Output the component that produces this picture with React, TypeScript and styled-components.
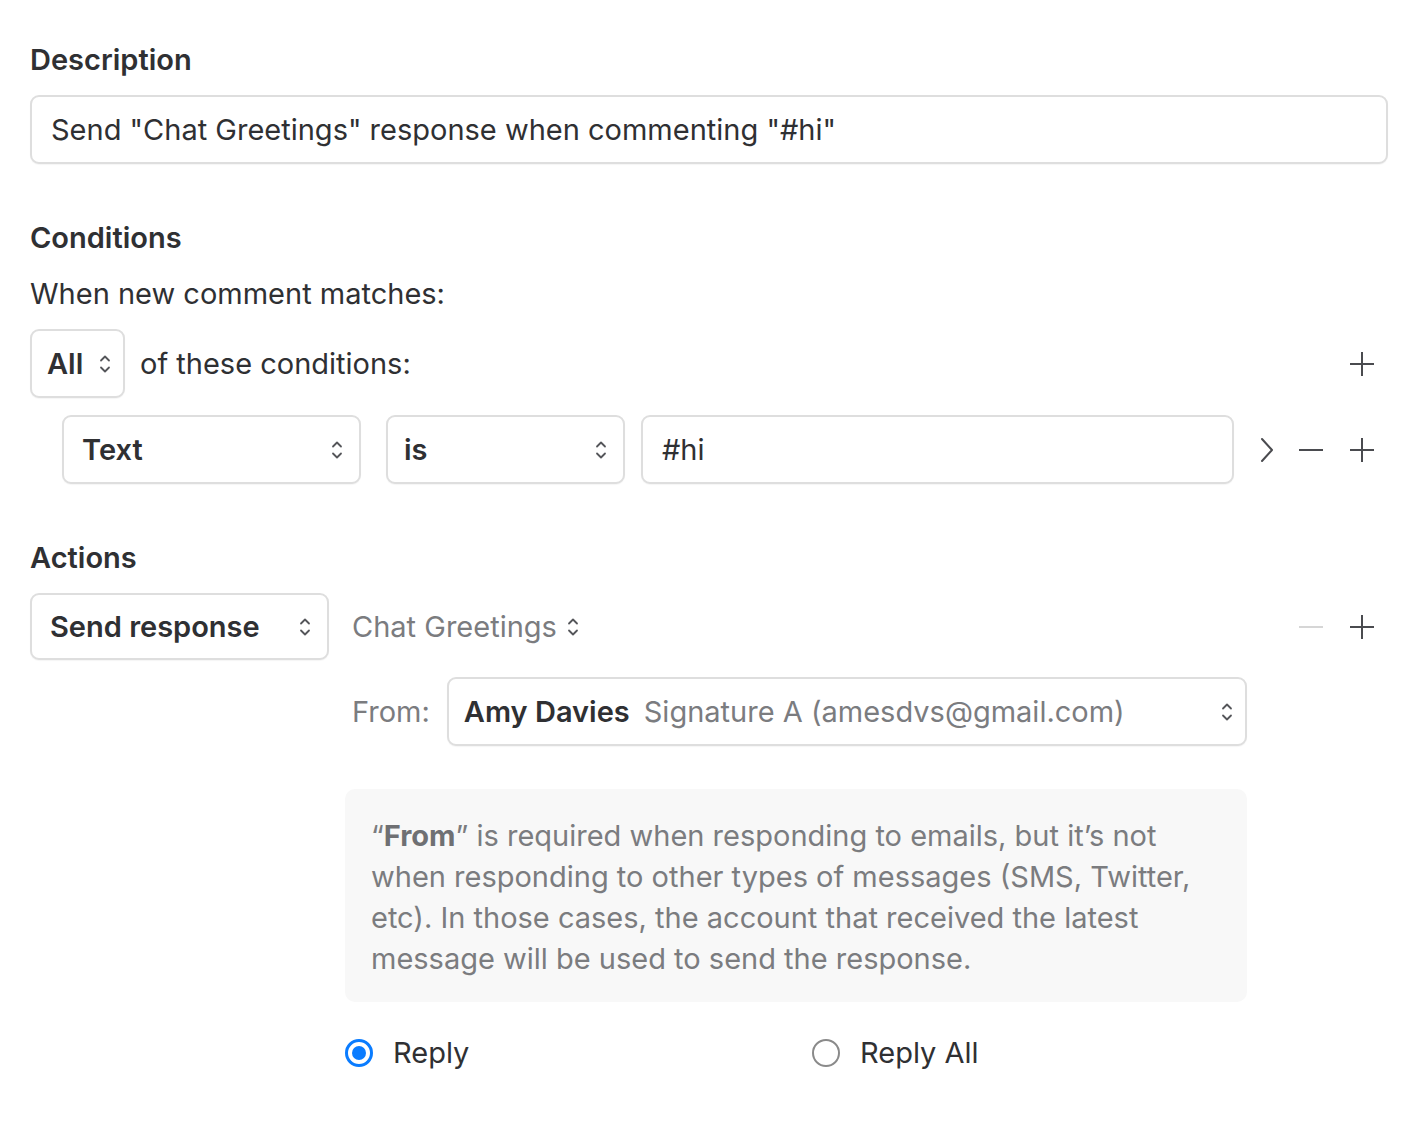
import React from "react";
import styled, { createGlobalStyle } from "styled-components";

const Global = createGlobalStyle`
  html, body { margin: 0; padding: 0; background: #fff; }
  body { font-family: Inter, "Noto Sans", sans-serif; color: #2f3033; -webkit-font-smoothing: antialiased; }
  * { box-sizing: border-box; }
`;

const Page = styled.div`
  padding: 43px 38px 40px 30px;
  display: flex;
  flex-direction: column;
  font-size: 29px;
  line-height: 34px;
`;

const Label = styled.div<{ $mt?: number }>`
  font-weight: 600;
  font-size: 29px;
  line-height: 34px;
  color: #2f3033;
  margin-top: ${(p) => p.$mt ?? 0}px;
`;

const TextLine = styled.div<{ $mt?: number }>`
  margin-top: ${(p) => p.$mt ?? 0}px;
  color: #2f3033;
`;

const Field = styled.div<{ $w?: number; $mt?: number; $h?: number }>`
  height: ${(p) => p.$h ?? 69}px;
  ${(p) => (p.$w ? `width: ${p.$w}px; flex: none;` : "flex: 1 1 auto; min-width: 0;")}
  margin-top: ${(p) => p.$mt ?? 0}px;
  border: 2px solid #dedede;
  border-radius: 9px;
  box-shadow: 0 1px 1px rgba(0, 0, 0, 0.04);
  background: #fff;
  display: flex;
  align-items: center;
  padding: 0 19px;
  color: #2f3033;
`;

const SelectBox = styled(Field)<{ $pl?: number; $pr?: number }>`
  padding-left: ${(p) => p.$pl ?? 18}px;
  padding-right: ${(p) => p.$pr ?? 16}px;
  justify-content: space-between;
  font-weight: 600;
`;

const Row = styled.div<{ $mt?: number; $indent?: number }>`
  display: flex;
  align-items: center;
  margin-top: ${(p) => p.$mt ?? 0}px;
  padding-left: ${(p) => p.$indent ?? 0}px;
`;

const Spacer = styled.div`
  flex: 1;
`;

const Slot = styled.div<{ $ml?: number }>`
  width: 24px;
  height: 24px;
  flex: none;
  margin-left: ${(p) => p.$ml ?? 0}px;
  display: flex;
  align-items: center;
  justify-content: center;
`;

const Icons = styled.div`
  display: flex;
  align-items: center;
  padding-right: 14px;
`;

const Plain = styled.span<{ $ml?: number; $color?: string }>`
  margin-left: ${(p) => p.$ml ?? 0}px;
  color: ${(p) => p.$color ?? "#2f3033"};
  font-weight: 400;
`;

const ActionsGrid = styled.div`
  display: flex;
  margin-top: 18px;
  align-items: flex-start;
`;

const RightCol = styled.div`
  flex: 1;
  display: flex;
  flex-direction: column;
  margin-left: 16px;
`;

const Inner = styled.div`
  width: 902px;
  display: flex;
  flex-direction: column;
`;

const GrayTrigger = styled.div`
  height: 67px;
  display: flex;
  align-items: center;
  padding-left: 7px;
  color: #7b7c7f;
  gap: 10px;
`;

const FromRow = styled.div`
  display: flex;
  align-items: center;
  margin-top: 17px;
  padding-left: 7px;
`;

const FromLabel = styled.span`
  color: #7b7c7f;
  margin-right: 17px;
`;

const InfoBox = styled.div`
  margin-top: 43px;
  background: #f8f8f8;
  border-radius: 10px;
  padding: 26px 27px 23px 26px;
  color: #7b7c7f;
  line-height: 41px;
  font-size: 29px;
`;

const Strong = styled.strong`
  color: #6f7073;
  font-weight: 700;
`;

const RadioRow = styled.div`
  display: flex;
  align-items: center;
  margin-top: 34px;
`;

const RadioItem = styled.label<{ $w?: number }>`
  display: flex;
  align-items: center;
  gap: 20px;
  width: ${(p) => p.$w ?? 0}px;
  color: #2f3033;
`;

const RadioCircle = styled.span<{ $on?: boolean }>`
  width: 28px;
  height: 28px;
  border-radius: 50%;
  flex: none;
  border: ${(p) => (p.$on ? "3px solid #0a7cff" : "2px solid #8a8a8a")};
  background: #fff;
  display: flex;
  align-items: center;
  justify-content: center;
  &::after {
    content: "";
    width: 14px;
    height: 14px;
    border-radius: 50%;
    background: ${(p) => (p.$on ? "#0a7cff" : "transparent")};
  }
`;

const Updown = () => (
  <svg width={12} height={22} viewBox="0 0 12 22" fill="none" stroke="#55565a" strokeWidth="1.8" strokeLinecap="round" strokeLinejoin="round">
    <path d="M2 7.5 L6 3.5 L10 7.5" />
    <path d="M2 14.5 L6 18.5 L10 14.5" />
  </svg>
);

const Plus = () => (
  <svg width="24" height="24" viewBox="0 0 24 24" stroke="#4a4b4f" strokeWidth="2">
    <path d="M12 0 V24 M0 12 H24" />
  </svg>
);

const Minus = ({ light }: { light?: boolean }) => (
  <svg width="24" height="24" viewBox="0 0 24 24" stroke={light ? "#d6d6d6" : "#4a4b4f"} strokeWidth="2">
    <path d="M0 12 H24" />
  </svg>
);

const Chevron = () => (
  <svg width="14" height="26" viewBox="0 0 14 26" fill="none" stroke="#4a4b4f" strokeWidth="2" strokeLinecap="round" strokeLinejoin="round">
    <path d="M2 2 L12 13 L2 24" />
  </svg>
);

export default function App() {
  return (
    <Page>
      <Global />
      <Label>Description</Label>
      <Field $mt={18}>Send "Chat Greetings" response when commenting "#hi"</Field>

      <Label $mt={57}>Conditions</Label>
      <TextLine $mt={22}>When new comment matches:</TextLine>
      <Row $mt={18}>
        <SelectBox $w={95} $pl={15} $pr={12}>
          All <Updown />
        </SelectBox>
        <Plain $ml={15}>of these conditions:</Plain>
        <Spacer />
        <Icons>
          <Slot>
            <Plus />
          </Slot>
        </Icons>
      </Row>
      <Row $mt={17} $indent={32}>
        <SelectBox $w={299} $pl={18} $pr={16}>
          Text <Updown />
        </SelectBox>
        <SelectBox $w={239} $pl={16} $pr={16} style={{ marginLeft: 25 }}>
          is <Updown />
        </SelectBox>
        <Field style={{ marginLeft: 16 }}>#hi</Field>
        <Icons>
          <Slot $ml={21}>
            <Chevron />
          </Slot>
          <Slot $ml={20}>
            <Minus />
          </Slot>
          <Slot $ml={27}>
            <Plus />
          </Slot>
        </Icons>
      </Row>

      <Label $mt={57}>Actions</Label>
      <ActionsGrid>
        <SelectBox $w={299} $h={67} $pl={18} $pr={16}>
          Send response <Updown />
        </SelectBox>
        <RightCol>
          <Row>
            <GrayTrigger>
              Chat Greetings <Updown />
            </GrayTrigger>
            <Spacer />
            <Icons>
              <Slot>
                <Minus light />
              </Slot>
              <Slot $ml={27}>
                <Plus />
              </Slot>
            </Icons>
          </Row>
          <Inner>
            <FromRow>
              <FromLabel>From:</FromLabel>
              <SelectBox $h={69} $pl={15} $pr={12}>
                <span>
                  Amy Davies<Plain $ml={14} $color="#7b7c7f">Signature A (amesdvs@gmail.com)</Plain>
                </span>
                <Updown />
              </SelectBox>
            </FromRow>
            <InfoBox>
              “<Strong>From</Strong>” is required when responding to emails, but it’s not when responding to other
              types of messages (SMS, Twitter, etc). In those cases, the account that received the latest message will
              be used to send the response.
            </InfoBox>
            <RadioRow>
              <RadioItem $w={467}>
                <RadioCircle $on />
                Reply
              </RadioItem>
              <RadioItem $w={300}>
                <RadioCircle />
                Reply All
              </RadioItem>
            </RadioRow>
          </Inner>
        </RightCol>
      </ActionsGrid>
    </Page>
  );
}
